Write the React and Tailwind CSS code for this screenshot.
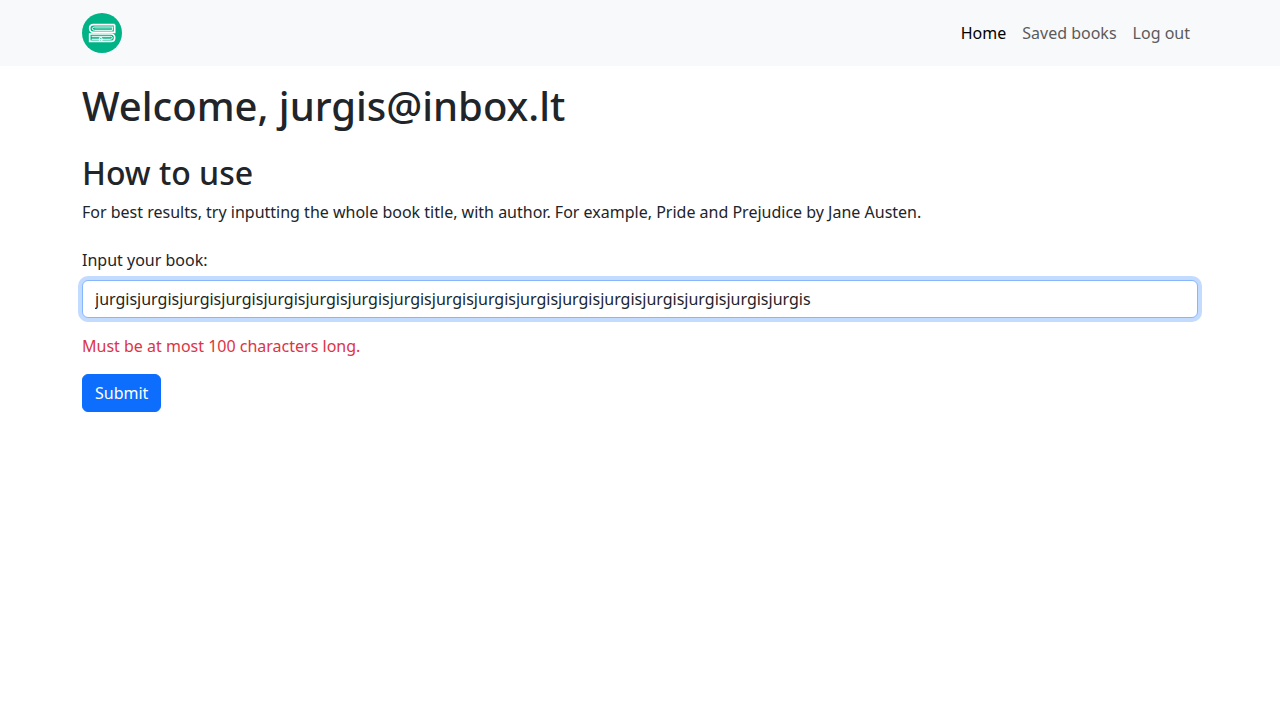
const navItems = [
  { label: "Home", active: true },
  { label: "Saved books", active: false },
  { label: "Log out", active: false },
];

function Logo() {
  return (
    <svg viewBox="0 0 120 120" className="size-10" aria-hidden="true">
      <circle cx="60" cy="60" r="60" fill="#00b386" />
      <g fill="none" stroke="#fff">
        <path d="M98 35H34Q23 35 23 46Q23 58 34 58H98V35" strokeWidth="5" />
        <path d="M94 42H38Q31 42 31 47Q31 52 38 52H91V42" strokeWidth="3" />
        <path d="M38 47H88" strokeWidth="2" opacity=".5" />
        <path d="M23 63V85H87Q98 85 98 74Q98 63 87 63Z" strokeWidth="5" />
        <path d="M29 70H85Q91 70 91 74Q91 79 85 79H29" strokeWidth="3" />
        <path d="M30 75H50M62 75H86" strokeWidth="2" opacity=".5" />
        <path d="M52 74V83L56 80L60 83V74Z" strokeWidth="3" />
      </g>
    </svg>
  );
}

export default function App() {
  return (
    <div className="min-h-screen bg-white font-['Noto_Sans',sans-serif] text-base text-[#212529]">
      <nav className="bg-[#f8f9fa] py-2">
        <div className="mx-auto flex max-w-[1140px] items-center justify-between px-3">
          <a href="#home" aria-label="Home page" className="py-[5px]">
            <Logo />
          </a>
          <ul className="flex">
            {navItems.map((item) => (
              <li key={item.label}>
                <a
                  href="#"
                  aria-current={item.active ? "page" : undefined}
                  className={item.active ? "block p-2 text-black" : "block p-2 text-[#5a5b5c]"}
                >
                  {item.label}
                </a>
              </li>
            ))}
          </ul>
        </div>
      </nav>

      <main className="mx-auto max-w-[1140px] px-3 pt-4">
        <h1 className="mb-6 text-[40px]/[48px] font-medium">Welcome, jurgis@inbox.lt</h1>
        <h2 className="mb-2 text-[32px]/[38px] font-medium">How to use</h2>
        <p className="mb-6">
          For best results, try inputting the whole book title, with author. For example, Pride and
          Prejudice by Jane Austen.
        </p>
        <form onSubmit={(event) => event.preventDefault()}>
          <label htmlFor="book" className="mb-2 block">
            Input your book:
          </label>
          <input
            id="book"
            type="text"
            defaultValue={"jurgis".repeat(17)}
            aria-invalid="true"
            aria-describedby="book-error"
            className="mb-4 block w-full rounded-md border border-[#86b7fe] bg-white px-3 py-[6px] leading-6 ring-4 ring-[#0d6efd]/25 outline-none"
          />
          <p id="book-error" className="mb-4 text-[#dc3545]">
            Must be at most 100 characters long.
          </p>
          <button
            type="submit"
            className="rounded-md border border-[#0d6efd] bg-[#0d6efd] px-3 py-[6px] text-white"
          >
            Submit
          </button>
        </form>
      </main>
    </div>
  );
}
